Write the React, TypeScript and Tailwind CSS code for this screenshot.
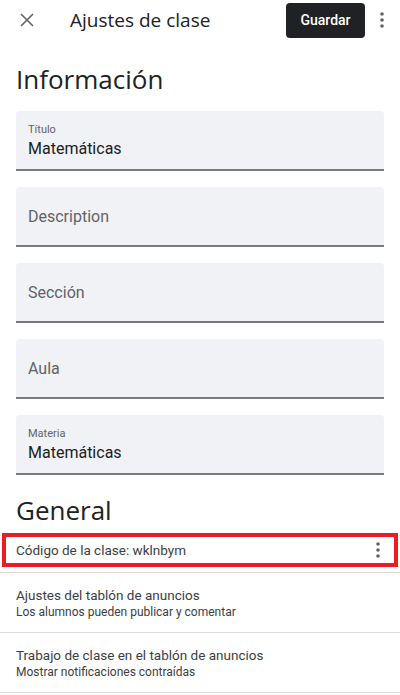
import React from "react";

const Dots = ({ cls }: { cls: string }) => (
  <svg width="4" height="16" viewBox="0 0 4 16" className={cls}>
    <circle cx="2" cy="2" r="1.8" fill="currentColor" />
    <circle cx="2" cy="8" r="1.8" fill="currentColor" />
    <circle cx="2" cy="14" r="1.8" fill="currentColor" />
  </svg>
);

const Field = ({ label, value, placeholder }: { label?: string; value?: string; placeholder?: string }) => (
  <div className="h-[60px] rounded-t-[4px] bg-[#f1f2f5] border-b-[2px] border-[#777a7e] px-3 flex flex-col justify-center">
    {label ? (
      <>
        <div className="text-[11px] leading-[13px] text-[#5f6368] mt-[2px]">{label}</div>
        <div className="text-[16px] leading-[20px] text-[#202124] mt-[3px]">{value}</div>
      </>
    ) : (
      <div className="text-[16px] leading-[20px] text-[#5f6368] mt-[2px]">{placeholder}</div>
    )}
  </div>
);

export default function App() {
  return (
    <div className="w-[400px] h-[695px] bg-white overflow-hidden" style={{ fontFamily: "Roboto, 'Liberation Sans', sans-serif" }}>
      <div className="h-[40px] flex items-center">
        <svg width="14" height="14" viewBox="0 0 14 14" className="ml-[20px] text-[#5f6368]">
          <path d="M1 1 L13 13 M13 1 L1 13" stroke="currentColor" strokeWidth="1.6" />
        </svg>
        <div className="ml-[36px] text-[19px] text-[#202124]" style={{ fontFamily: "'Open Sans', sans-serif" }}>Ajustes de clase</div>
        <div className="ml-auto mr-[10px] flex items-center">
          <div className="h-[35px] w-[79px] mt-[1px] rounded-[4px] bg-[#202124] text-white text-[14px] font-medium flex items-center justify-center">Guardar</div>
          <Dots cls="ml-[15px] mr-[6px] text-[#5f6368]" />
        </div>
      </div>
      <div className="px-4">
        <div className="mt-[21px] text-[26px] leading-[36px] text-[#202124]" style={{ fontFamily: "'Open Sans', sans-serif" }}>Información</div>
        <div className="mt-[14px] flex flex-col gap-[16px]">
          <Field label="Título" value="Matemáticas" />
          <Field placeholder="Description" />
          <Field placeholder="Sección" />
          <Field placeholder="Aula" />
          <Field label="Materia" value="Matemáticas" />
        </div>
        <div className="mt-[17px] text-[26px] leading-[36px] text-[#202124]" style={{ fontFamily: "'Open Sans', sans-serif" }}>General</div>
      </div>
      <div className="mt-[5px]">
        <div className="mx-[2px] h-[34px] border-[4px] border-[#ec1c24] flex items-center pl-[10px] pr-[14px]">
          <div className="text-[13.5px] text-[#3c4043]">Código de la clase: wklnbym</div>
          <Dots cls="ml-auto text-[#5f6368]" />
        </div>
        <div className="mt-[5px] h-[1px] bg-[#dadce0]" />
        <div className="h-[59px] px-4 flex flex-col justify-center">
          <div className="text-[13.5px] leading-[18px] text-[#3c4043]">Ajustes del tablón de anuncios</div>
          <div className="text-[12px] leading-[16px] text-[#3c4043]">Los alumnos pueden publicar y comentar</div>
        </div>
        <div className="h-[1px] bg-[#dadce0]" />
        <div className="h-[59px] px-4 flex flex-col justify-center">
          <div className="text-[13.5px] leading-[18px] text-[#3c4043]">Trabajo de clase en el tablón de anuncios</div>
          <div className="text-[12px] leading-[16px] text-[#3c4043]">Mostrar notificaciones contraídas</div>
        </div>
        <div className="h-[1px] bg-[#dadce0]" />
      </div>
    </div>
  );
}
